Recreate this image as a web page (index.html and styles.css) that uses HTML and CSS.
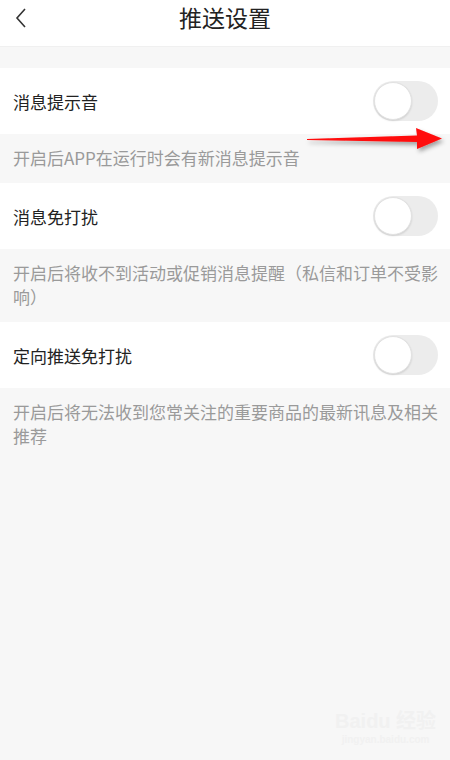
FILE: index.html
```html
<!DOCTYPE html>
<html lang="zh">
<head>
    <meta charset="UTF-8">
    <title>推送设置</title>
    <link rel="stylesheet" href="styles.css">
</head>
<body>
    <div class="page">
        <div class="top-bar">
            <svg class="back" width="14" height="22" viewBox="0 0 14 22">
                <path d="M11 2 L3 11 L11 20" fill="none" stroke="#333" stroke-width="1.6"/>
            </svg>
            <h1 class="title">推送设置</h1>
        </div>
        <div class="spacer"></div>

        <div class="row">
            <span class="label">消息提示音</span>
            <div class="switch"><div class="knob"></div></div>
        </div>
        <div class="note">开启后APP在运行时会有新消息提示音</div>

        <div class="row">
            <span class="label">消息免打扰</span>
            <div class="switch"><div class="knob"></div></div>
        </div>
        <div class="note">开启后将收不到活动或促销消息提醒（私信和订单不受影响）</div>

        <div class="row">
            <span class="label">定向推送免打扰</span>
            <div class="switch"><div class="knob"></div></div>
        </div>
        <div class="note">开启后将无法收到您常关注的重要商品的最新讯息及相关推荐</div>

        <svg class="arrow" width="150" height="34" viewBox="0 0 150 34">
            <defs>
                <filter id="sh" x="-10%" y="-30%" width="130%" height="180%">
                    <feDropShadow dx="2" dy="3" stdDeviation="2" flood-color="#000" flood-opacity="0.35"/>
                </filter>
            </defs>
            <polygon filter="url(#sh)" fill="#ff0a0a"
                points="2,15 112,11.5 111,4 137,14.5 112,25 112,18 2,16"/>
        </svg>

        <div class="watermark">
            <span class="wm-logo">Bai<b>du</b> 经验</span>
            <span class="wm-url">jingyan.baidu.com</span>
        </div>
    </div>
</body>
</html>
```

FILE: styles.css
```css
body {
    margin: 0;
    padding: 0;
    background-color: #f7f7f7;
    font-family: "Noto Sans CJK SC", "Noto Sans", sans-serif;
}

.page {
    position: relative;
    width: 450px;
    height: 760px;
    overflow: hidden;
    background-color: #f7f7f7;
}

.top-bar {
    position: relative;
    height: 47px;
    background-color: #fff;
    display: flex;
    align-items: center;
    justify-content: center;
    border-bottom: 1px solid #f0f0f0;
    box-sizing: border-box;
}

.back {
    position: absolute;
    left: 14px;
    top: 7px;
}

.title {
    margin: 0;
    font-size: 23px;
    font-weight: normal;
    color: #222;
    margin-top: -12px;
}

.spacer {
    height: 21px;
}

.row {
    height: 66px;
    background-color: #fff;
    display: flex;
    align-items: center;
    justify-content: space-between;
    padding: 0 12px 0 13px;
}

.label {
    font-size: 17px;
    color: #222;
}

.switch {
    width: 65px;
    height: 40px;
    border-radius: 20px;
    background-color: #ececec;
    position: relative;
}

.knob {
    position: absolute;
    left: 1px;
    top: 1px;
    width: 36px;
    height: 36px;
    border-radius: 50%;
    background-color: #fff;
    border: 1px solid #e2e2e2;
    box-shadow: 0 1px 2px rgba(0, 0, 0, 0.12);
}

.note {
    padding: 12px 12px 13px 13px;
    font-size: 17px;
    line-height: 24px;
    color: #9a9a9a;
}

.arrow {
    position: absolute;
    left: 305px;
    top: 124px;
}

.watermark {
    position: absolute;
    left: 335px;
    top: 705px;
    color: #f1f1f1;
    display: flex;
    flex-direction: column;
    align-items: center;
}

.wm-logo {
    font-family: "Liberation Sans", "Noto Sans CJK SC", sans-serif;
    font-size: 20px;
    font-weight: bold;
}

.wm-url {
    font-family: "Liberation Sans", sans-serif;
    font-size: 10px;
    font-weight: bold;
}
```
